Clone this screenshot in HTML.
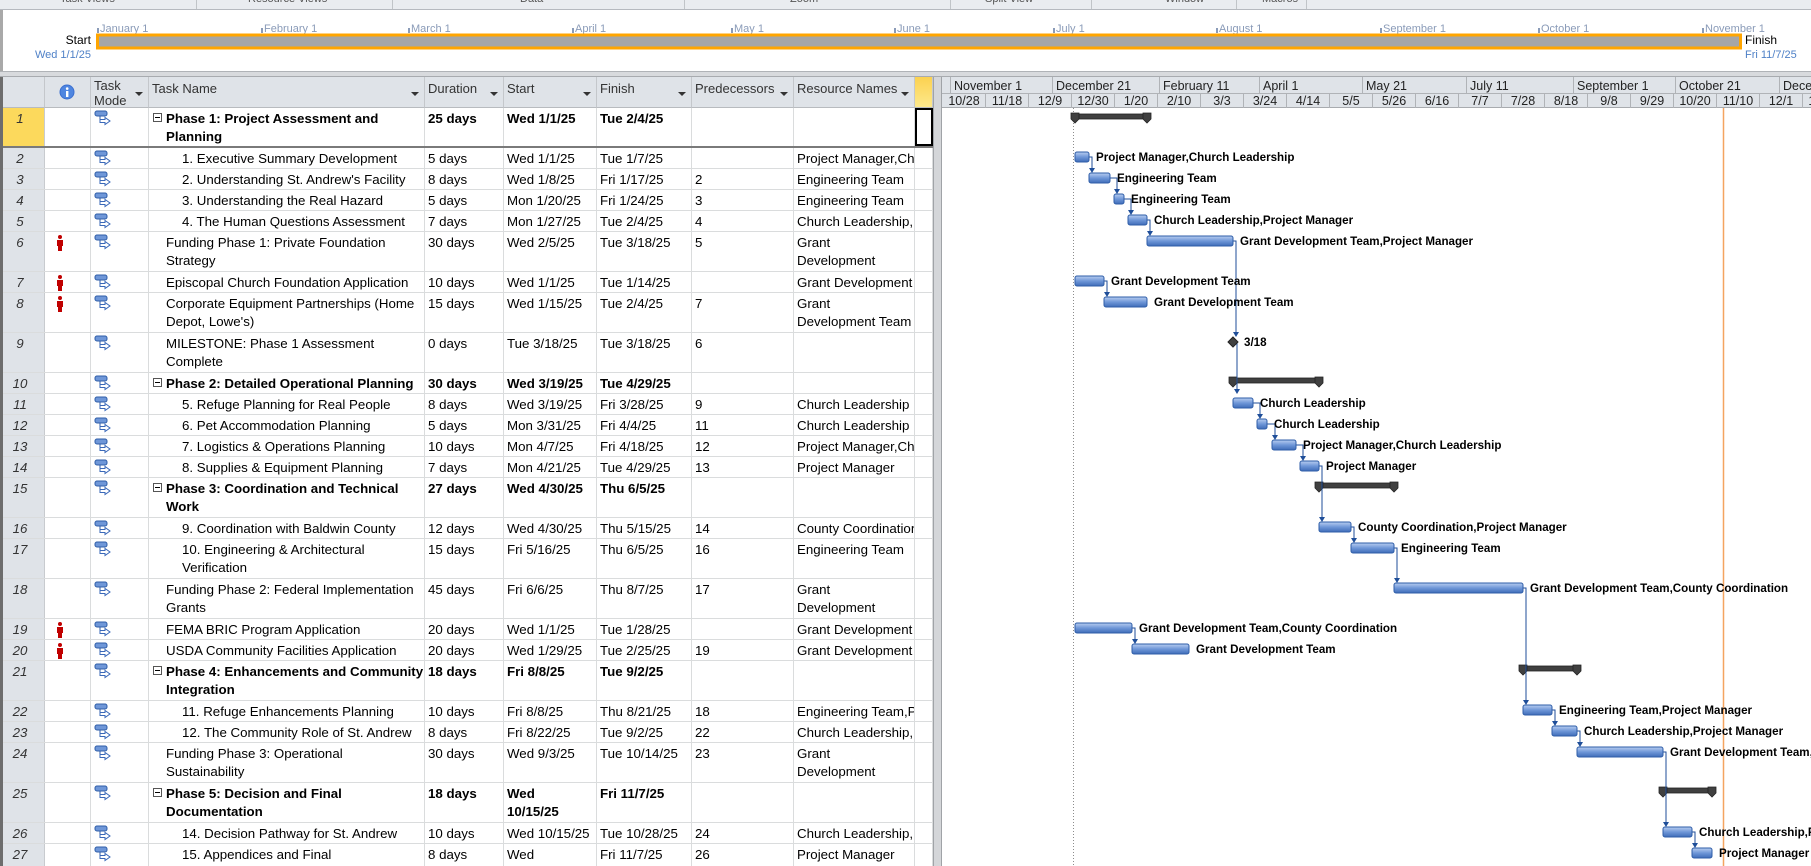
<!DOCTYPE html>
<html style="width:1811px;height:866px;overflow:hidden"><head><meta charset="utf-8">
<style>
*{margin:0;padding:0;box-sizing:border-box}
body{width:1811px;height:866px;overflow:hidden;background:#fff;font-family:"Liberation Sans",sans-serif;font-size:13.3px;color:#000;position:relative}
.abs{position:absolute}
.row{position:absolute;left:0;width:933px;border-bottom:1px solid #dadcdd}
.c{position:absolute;top:0;bottom:0;border-right:1px solid #dadcdd;overflow:hidden;white-space:nowrap;padding:2px 3px 0 3px;line-height:18px}
.n{left:0;width:45px;background:#dfe3e8;text-align:center;font-style:italic;color:#333;padding-left:0;padding-right:4px;border-right:1px solid #c8cbcf}
.i{left:45px;width:46px}
.m{left:91px;width:58px}
.t{left:149px;width:276px;padding-left:17px}
.t2{padding-left:33px}
.d{left:425px;width:79px}
.s{left:504px;width:93px}
.f{left:597px;width:95px}
.p{left:692px;width:102px}
.rs{left:794px;width:121px}
.y{left:915px;width:18px}
.b{font-weight:bold}
.box{display:inline-block;width:9px;height:9px;border:1px solid #555;position:absolute;left:4px;top:5px}
.box:after{content:"";position:absolute;left:1px;top:3px;width:5px;height:1px;background:#000}
.hd{position:absolute;top:77px;height:31px;background:#dfe3e8;border-right:1px solid #c4c7cb;border-bottom:1px solid #b8bbbf;color:#333;padding:4px 3px 0 3px;line-height:15px;font-size:13px}
.hd .ar{position:absolute;right:5px;top:15px;width:0;height:0;border-left:4px solid transparent;border-right:4px solid transparent;border-top:4px solid #333}
.mode{position:absolute;left:3px;top:2px}
.ind{position:absolute;left:11px;top:3px}
</style></head><body>

<div class="abs" style="left:0;top:0;width:1811px;height:10px;background:#e9ecf0;border-bottom:1px solid #b5b9bf;overflow:hidden;font-size:11px;color:#555">
<span class="abs" style="left:60px;top:-7px">Task Views</span>
<span class="abs" style="left:248px;top:-7px">Resource Views</span>
<span class="abs" style="left:520px;top:-7px">Data</span>
<span class="abs" style="left:790px;top:-7px">Zoom</span>
<span class="abs" style="left:985px;top:-7px">Split View</span>
<span class="abs" style="left:1165px;top:-7px">Window</span>
<span class="abs" style="left:1262px;top:-7px">Macros</span>
<div class="abs" style="left:196px;top:0;width:1px;height:10px;background:#c0c4c8"></div>
<div class="abs" style="left:392px;top:0;width:1px;height:10px;background:#c0c4c8"></div>
<div class="abs" style="left:684px;top:0;width:1px;height:10px;background:#c0c4c8"></div>
<div class="abs" style="left:950px;top:0;width:1px;height:10px;background:#c0c4c8"></div>
<div class="abs" style="left:1091px;top:0;width:1px;height:10px;background:#c0c4c8"></div>
<div class="abs" style="left:1236px;top:0;width:1px;height:10px;background:#c0c4c8"></div>
<div class="abs" style="left:1306px;top:0;width:1px;height:10px;background:#c0c4c8"></div>
</div>

<div class="abs" style="left:0;top:10px;width:1811px;height:61px;background:#fff;border-left:3px solid #a9a9a9"></div>
<div class="abs" style="left:0;top:71px;width:1811px;height:6px;background:#d8dadd;border-top:1px solid #b0b3b7;border-bottom:1px solid #a8abaf"></div>
<svg class="abs" style="left:0;top:0" width="1811" height="71">
<g font-family="Liberation Sans, sans-serif" font-size="11" fill="#8a9bb8">
<g stroke="#8a9bb8" stroke-width="2">
<line x1="98" y1="28" x2="98" y2="33"/><line x1="262" y1="28" x2="262" y2="33"/><line x1="409" y1="28" x2="409" y2="33"/><line x1="573" y1="28" x2="573" y2="33"/><line x1="732" y1="28" x2="732" y2="33"/><line x1="895" y1="28" x2="895" y2="33"/><line x1="1054" y1="28" x2="1054" y2="33"/><line x1="1217" y1="28" x2="1217" y2="33"/><line x1="1381" y1="28" x2="1381" y2="33"/><line x1="1539" y1="28" x2="1539" y2="33"/><line x1="1703" y1="28" x2="1703" y2="33"/>
</g>
<text x="100" y="32">January 1</text><text x="264" y="32">February 1</text><text x="411" y="32">March 1</text><text x="575" y="32">April 1</text><text x="734" y="32">May 1</text><text x="897" y="32">June 1</text><text x="1056" y="32">July 1</text><text x="1219" y="32">August 1</text><text x="1383" y="32">September 1</text><text x="1541" y="32">October 1</text><text x="1705" y="32">November 1</text>
</g>
<rect x="97.5" y="35" width="1643" height="13" fill="#a6a6a6" stroke="#ffa500" stroke-width="3"/>
<text x="91" y="44" text-anchor="end" font-family="Liberation Sans, sans-serif" font-size="12" fill="#000">Start</text>
<text x="91" y="58" text-anchor="end" font-family="Liberation Sans, sans-serif" font-size="11" fill="#4f81c7">Wed 1/1/25</text>
<text x="1745" y="44" font-family="Liberation Sans, sans-serif" font-size="12" fill="#000">Finish</text>
<text x="1745" y="58" font-family="Liberation Sans, sans-serif" font-size="11" fill="#4f81c7">Fri 11/7/25</text>
</svg>

<div class="abs" style="left:0;top:77px;width:3px;height:789px;background:#6d6d6d;z-index:5"></div>

<div class="hd" style="left:0;width:45px"></div>
<div class="hd" style="left:45px;width:46px"><svg class="abs" style="left:14px;top:7px" width="16" height="16"><circle cx="8" cy="8" r="7.5" fill="#3a6fd0"/><circle cx="8" cy="8" r="6.5" fill="#4f86e0"/><rect x="7" y="7" width="2.4" height="6" fill="#fff"/><circle cx="8.2" cy="4.6" r="1.3" fill="#fff"/></svg></div>
<div class="hd" style="left:91px;width:58px;padding-top:1px">Task<br>Mode<span class="ar"></span></div>
<div class="hd" style="left:149px;width:276px">Task Name<span class="ar"></span></div>
<div class="hd" style="left:425px;width:79px">Duration<span class="ar"></span></div>
<div class="hd" style="left:504px;width:93px">Start<span class="ar"></span></div>
<div class="hd" style="left:597px;width:95px">Finish<span class="ar"></span></div>
<div class="hd" style="left:692px;width:102px">Predecessors<span class="ar"></span></div>
<div class="hd" style="left:794px;width:121px">Resource Names<span class="ar"></span></div>
<div class="hd" style="left:915px;width:18px;background:linear-gradient(#fbd150,#fde98c)"></div>
<div class="abs" style="left:933px;top:77px;width:9px;height:789px;background:#d4d6d9;border-left:1px solid #a0a3a7;border-right:1px solid #a0a3a7"></div>

<svg width="0" height="0" style="position:absolute"><defs>
<symbol id="md" viewBox="0 0 20 18"><rect x="1" y="1" width="12" height="5" rx="2" fill="#6f97d8" stroke="#2f5ea8"/><line x1="6" y1="6" x2="6" y2="10" stroke="#2f5ea8"/><path d="M6 9.5 H11 V7.5 L16 11 L11 14.5 V12.5 H6 Z" fill="#fff" stroke="#3a68b8"/></symbol>
<symbol id="pp" viewBox="0 0 8 16"><circle cx="4" cy="2" r="2" fill="#c00000"/><rect x="1" y="5" width="6" height="6" fill="#c00000"/><rect x="2" y="10" width="4" height="6" fill="#c00000"/></symbol>
</defs></svg>

<div class="row" style="top:108px;height:40px;border-bottom:2px solid #7a7a7a"><div class="c n" style="background:#fcd95c">1</div><div class="c i"></div><div class="c m"><svg class="mode" width="20" height="18"><use href="#md"/></svg></div><div class="c t b"><span class="box"></span>Phase 1: Project Assessment and<br>Planning</div><div class="c d b">25 days</div><div class="c s b">Wed 1/1/25</div><div class="c f b">Tue 2/4/25</div><div class="c p"></div><div class="c rs"></div><div class="c y" style="border:2px solid #000"></div></div>
<div class="row" style="top:148px;height:21px"><div class="c n">2</div><div class="c i"></div><div class="c m"><svg class="mode" width="20" height="18"><use href="#md"/></svg></div><div class="c t t2">1. Executive Summary Development</div><div class="c d">5 days</div><div class="c s">Wed 1/1/25</div><div class="c f">Tue 1/7/25</div><div class="c p"></div><div class="c rs">Project Manager,Church Leadership</div><div class="c y"></div></div>
<div class="row" style="top:169px;height:21px"><div class="c n">3</div><div class="c i"></div><div class="c m"><svg class="mode" width="20" height="18"><use href="#md"/></svg></div><div class="c t t2">2. Understanding St. Andrew's Facility</div><div class="c d">8 days</div><div class="c s">Wed 1/8/25</div><div class="c f">Fri 1/17/25</div><div class="c p">2</div><div class="c rs">Engineering Team</div><div class="c y"></div></div>
<div class="row" style="top:190px;height:21px"><div class="c n">4</div><div class="c i"></div><div class="c m"><svg class="mode" width="20" height="18"><use href="#md"/></svg></div><div class="c t t2">3. Understanding the Real Hazard</div><div class="c d">5 days</div><div class="c s">Mon 1/20/25</div><div class="c f">Fri 1/24/25</div><div class="c p">3</div><div class="c rs">Engineering Team</div><div class="c y"></div></div>
<div class="row" style="top:211px;height:21px"><div class="c n">5</div><div class="c i"></div><div class="c m"><svg class="mode" width="20" height="18"><use href="#md"/></svg></div><div class="c t t2">4. The Human Questions Assessment</div><div class="c d">7 days</div><div class="c s">Mon 1/27/25</div><div class="c f">Tue 2/4/25</div><div class="c p">4</div><div class="c rs">Church Leadership,Project Manager</div><div class="c y"></div></div>
<div class="row" style="top:232px;height:40px"><div class="c n">6</div><div class="c i"><svg class="ind" width="8" height="16"><use href="#pp"/></svg></div><div class="c m"><svg class="mode" width="20" height="18"><use href="#md"/></svg></div><div class="c t">Funding Phase 1: Private Foundation<br>Strategy</div><div class="c d">30 days</div><div class="c s">Wed 2/5/25</div><div class="c f">Tue 3/18/25</div><div class="c p">5</div><div class="c rs">Grant<br>Development</div><div class="c y"></div></div>
<div class="row" style="top:272px;height:21px"><div class="c n">7</div><div class="c i"><svg class="ind" width="8" height="16"><use href="#pp"/></svg></div><div class="c m"><svg class="mode" width="20" height="18"><use href="#md"/></svg></div><div class="c t">Episcopal Church Foundation Application</div><div class="c d">10 days</div><div class="c s">Wed 1/1/25</div><div class="c f">Tue 1/14/25</div><div class="c p"></div><div class="c rs">Grant Development Team</div><div class="c y"></div></div>
<div class="row" style="top:293px;height:40px"><div class="c n">8</div><div class="c i"><svg class="ind" width="8" height="16"><use href="#pp"/></svg></div><div class="c m"><svg class="mode" width="20" height="18"><use href="#md"/></svg></div><div class="c t">Corporate Equipment Partnerships (Home<br>Depot, Lowe's)</div><div class="c d">15 days</div><div class="c s">Wed 1/15/25</div><div class="c f">Tue 2/4/25</div><div class="c p">7</div><div class="c rs">Grant<br>Development Team</div><div class="c y"></div></div>
<div class="row" style="top:333px;height:40px"><div class="c n">9</div><div class="c i"></div><div class="c m"><svg class="mode" width="20" height="18"><use href="#md"/></svg></div><div class="c t">MILESTONE: Phase 1 Assessment<br>Complete</div><div class="c d">0 days</div><div class="c s">Tue 3/18/25</div><div class="c f">Tue 3/18/25</div><div class="c p">6</div><div class="c rs"></div><div class="c y"></div></div>
<div class="row" style="top:373px;height:21px"><div class="c n">10</div><div class="c i"></div><div class="c m"><svg class="mode" width="20" height="18"><use href="#md"/></svg></div><div class="c t b"><span class="box"></span>Phase 2: Detailed Operational Planning</div><div class="c d b">30 days</div><div class="c s b">Wed 3/19/25</div><div class="c f b">Tue 4/29/25</div><div class="c p"></div><div class="c rs"></div><div class="c y"></div></div>
<div class="row" style="top:394px;height:21px"><div class="c n">11</div><div class="c i"></div><div class="c m"><svg class="mode" width="20" height="18"><use href="#md"/></svg></div><div class="c t t2">5. Refuge Planning for Real People</div><div class="c d">8 days</div><div class="c s">Wed 3/19/25</div><div class="c f">Fri 3/28/25</div><div class="c p">9</div><div class="c rs">Church Leadership</div><div class="c y"></div></div>
<div class="row" style="top:415px;height:21px"><div class="c n">12</div><div class="c i"></div><div class="c m"><svg class="mode" width="20" height="18"><use href="#md"/></svg></div><div class="c t t2">6. Pet Accommodation Planning</div><div class="c d">5 days</div><div class="c s">Mon 3/31/25</div><div class="c f">Fri 4/4/25</div><div class="c p">11</div><div class="c rs">Church Leadership</div><div class="c y"></div></div>
<div class="row" style="top:436px;height:21px"><div class="c n">13</div><div class="c i"></div><div class="c m"><svg class="mode" width="20" height="18"><use href="#md"/></svg></div><div class="c t t2">7. Logistics &amp; Operations Planning</div><div class="c d">10 days</div><div class="c s">Mon 4/7/25</div><div class="c f">Fri 4/18/25</div><div class="c p">12</div><div class="c rs">Project Manager,Church Leadership</div><div class="c y"></div></div>
<div class="row" style="top:457px;height:21px"><div class="c n">14</div><div class="c i"></div><div class="c m"><svg class="mode" width="20" height="18"><use href="#md"/></svg></div><div class="c t t2">8. Supplies &amp; Equipment Planning</div><div class="c d">7 days</div><div class="c s">Mon 4/21/25</div><div class="c f">Tue 4/29/25</div><div class="c p">13</div><div class="c rs">Project Manager</div><div class="c y"></div></div>
<div class="row" style="top:478px;height:40px"><div class="c n">15</div><div class="c i"></div><div class="c m"><svg class="mode" width="20" height="18"><use href="#md"/></svg></div><div class="c t b"><span class="box"></span>Phase 3: Coordination and Technical<br>Work</div><div class="c d b">27 days</div><div class="c s b">Wed 4/30/25</div><div class="c f b">Thu 6/5/25</div><div class="c p"></div><div class="c rs"></div><div class="c y"></div></div>
<div class="row" style="top:518px;height:21px"><div class="c n">16</div><div class="c i"></div><div class="c m"><svg class="mode" width="20" height="18"><use href="#md"/></svg></div><div class="c t t2">9. Coordination with Baldwin County</div><div class="c d">12 days</div><div class="c s">Wed 4/30/25</div><div class="c f">Thu 5/15/25</div><div class="c p">14</div><div class="c rs">County Coordination,Project Manager</div><div class="c y"></div></div>
<div class="row" style="top:539px;height:40px"><div class="c n">17</div><div class="c i"></div><div class="c m"><svg class="mode" width="20" height="18"><use href="#md"/></svg></div><div class="c t t2">10. Engineering &amp; Architectural<br>Verification</div><div class="c d">15 days</div><div class="c s">Fri 5/16/25</div><div class="c f">Thu 6/5/25</div><div class="c p">16</div><div class="c rs">Engineering Team</div><div class="c y"></div></div>
<div class="row" style="top:579px;height:40px"><div class="c n">18</div><div class="c i"></div><div class="c m"><svg class="mode" width="20" height="18"><use href="#md"/></svg></div><div class="c t">Funding Phase 2: Federal Implementation<br>Grants</div><div class="c d">45 days</div><div class="c s">Fri 6/6/25</div><div class="c f">Thu 8/7/25</div><div class="c p">17</div><div class="c rs">Grant<br>Development</div><div class="c y"></div></div>
<div class="row" style="top:619px;height:21px"><div class="c n">19</div><div class="c i"><svg class="ind" width="8" height="16"><use href="#pp"/></svg></div><div class="c m"><svg class="mode" width="20" height="18"><use href="#md"/></svg></div><div class="c t">FEMA BRIC Program Application</div><div class="c d">20 days</div><div class="c s">Wed 1/1/25</div><div class="c f">Tue 1/28/25</div><div class="c p"></div><div class="c rs">Grant Development Team</div><div class="c y"></div></div>
<div class="row" style="top:640px;height:21px"><div class="c n">20</div><div class="c i"><svg class="ind" width="8" height="16"><use href="#pp"/></svg></div><div class="c m"><svg class="mode" width="20" height="18"><use href="#md"/></svg></div><div class="c t">USDA Community Facilities Application</div><div class="c d">20 days</div><div class="c s">Wed 1/29/25</div><div class="c f">Tue 2/25/25</div><div class="c p">19</div><div class="c rs">Grant Development Team</div><div class="c y"></div></div>
<div class="row" style="top:661px;height:40px"><div class="c n">21</div><div class="c i"></div><div class="c m"><svg class="mode" width="20" height="18"><use href="#md"/></svg></div><div class="c t b"><span class="box"></span>Phase 4: Enhancements and Community<br>Integration</div><div class="c d b">18 days</div><div class="c s b">Fri 8/8/25</div><div class="c f b">Tue 9/2/25</div><div class="c p"></div><div class="c rs"></div><div class="c y"></div></div>
<div class="row" style="top:701px;height:21px"><div class="c n">22</div><div class="c i"></div><div class="c m"><svg class="mode" width="20" height="18"><use href="#md"/></svg></div><div class="c t t2">11. Refuge Enhancements Planning</div><div class="c d">10 days</div><div class="c s">Fri 8/8/25</div><div class="c f">Thu 8/21/25</div><div class="c p">18</div><div class="c rs">Engineering Team,Project Manager</div><div class="c y"></div></div>
<div class="row" style="top:722px;height:21px"><div class="c n">23</div><div class="c i"></div><div class="c m"><svg class="mode" width="20" height="18"><use href="#md"/></svg></div><div class="c t t2">12. The Community Role of St. Andrew</div><div class="c d">8 days</div><div class="c s">Fri 8/22/25</div><div class="c f">Tue 9/2/25</div><div class="c p">22</div><div class="c rs">Church Leadership,Project Manager</div><div class="c y"></div></div>
<div class="row" style="top:743px;height:40px"><div class="c n">24</div><div class="c i"></div><div class="c m"><svg class="mode" width="20" height="18"><use href="#md"/></svg></div><div class="c t">Funding Phase 3: Operational<br>Sustainability</div><div class="c d">30 days</div><div class="c s">Wed 9/3/25</div><div class="c f">Tue 10/14/25</div><div class="c p">23</div><div class="c rs">Grant<br>Development</div><div class="c y"></div></div>
<div class="row" style="top:783px;height:40px"><div class="c n">25</div><div class="c i"></div><div class="c m"><svg class="mode" width="20" height="18"><use href="#md"/></svg></div><div class="c t b"><span class="box"></span>Phase 5: Decision and Final<br>Documentation</div><div class="c d b">18 days</div><div class="c s b">Wed<br>10/15/25</div><div class="c f b">Fri 11/7/25</div><div class="c p"></div><div class="c rs"></div><div class="c y"></div></div>
<div class="row" style="top:823px;height:21px"><div class="c n">26</div><div class="c i"></div><div class="c m"><svg class="mode" width="20" height="18"><use href="#md"/></svg></div><div class="c t t2">14. Decision Pathway for St. Andrew</div><div class="c d">10 days</div><div class="c s">Wed 10/15/25</div><div class="c f">Tue 10/28/25</div><div class="c p">24</div><div class="c rs">Church Leadership,Project Manager</div><div class="c y"></div></div>
<div class="row" style="top:844px;height:22px;border-bottom:none"><div class="c n">27</div><div class="c i"></div><div class="c m"><svg class="mode" width="20" height="18"><use href="#md"/></svg></div><div class="c t t2">15. Appendices and Final</div><div class="c d">8 days</div><div class="c s">Wed</div><div class="c f">Fri 11/7/25</div><div class="c p">26</div><div class="c rs">Project Manager</div><div class="c y"></div></div>

<svg class="abs" style="left:942px;top:77px" width="869" height="789" viewBox="942 77 869 789" font-family="Liberation Sans, sans-serif">
<defs><linearGradient id="bg" x1="0" y1="0" x2="0" y2="1"><stop offset="0" stop-color="#b8cdf0"/><stop offset="0.5" stop-color="#6f97d8"/><stop offset="1" stop-color="#3f6cb8"/></linearGradient></defs>
<rect x="942" y="77" width="869" height="31" fill="#dfe3e8"/>
<line x1="942" y1="93.5" x2="1811" y2="93.5" stroke="#b0b3b7"/>
<line x1="942" y1="107.5" x2="1811" y2="107.5" stroke="#a8abaf"/>
<g stroke="#b0b3b7">
<line x1="950.5" y1="77" x2="950.5" y2="93"/><line x1="1052.5" y1="77" x2="1052.5" y2="93"/><line x1="1159.5" y1="77" x2="1159.5" y2="93"/><line x1="1259.5" y1="77" x2="1259.5" y2="93"/><line x1="1362.5" y1="77" x2="1362.5" y2="93"/><line x1="1466.5" y1="77" x2="1466.5" y2="93"/><line x1="1573.5" y1="77" x2="1573.5" y2="93"/><line x1="1675.5" y1="77" x2="1675.5" y2="93"/><line x1="1779.5" y1="77" x2="1779.5" y2="93"/>
<line x1="985.5" y1="93" x2="985.5" y2="108"/><line x1="1028.5" y1="93" x2="1028.5" y2="108"/><line x1="1071.5" y1="93" x2="1071.5" y2="108"/><line x1="1114.5" y1="93" x2="1114.5" y2="108"/><line x1="1157.5" y1="93" x2="1157.5" y2="108"/><line x1="1200.5" y1="93" x2="1200.5" y2="108"/><line x1="1243.5" y1="93" x2="1243.5" y2="108"/><line x1="1286.5" y1="93" x2="1286.5" y2="108"/><line x1="1329.5" y1="93" x2="1329.5" y2="108"/><line x1="1372.5" y1="93" x2="1372.5" y2="108"/><line x1="1415.5" y1="93" x2="1415.5" y2="108"/><line x1="1458.5" y1="93" x2="1458.5" y2="108"/><line x1="1501.5" y1="93" x2="1501.5" y2="108"/><line x1="1544.5" y1="93" x2="1544.5" y2="108"/><line x1="1587.5" y1="93" x2="1587.5" y2="108"/><line x1="1630.5" y1="93" x2="1630.5" y2="108"/><line x1="1673.5" y1="93" x2="1673.5" y2="108"/><line x1="1716.5" y1="93" x2="1716.5" y2="108"/><line x1="1759.5" y1="93" x2="1759.5" y2="108"/><line x1="1802.5" y1="93" x2="1802.5" y2="108"/>
</g>
<g font-size="12.5" fill="#222">
<text x="954" y="90">November 1</text><text x="1056" y="90">December 21</text><text x="1163" y="90">February 11</text><text x="1263" y="90">April 1</text><text x="1366" y="90">May 21</text><text x="1470" y="90">July 11</text><text x="1577" y="90">September 1</text><text x="1679" y="90">October 21</text><text x="1783" y="90">December 11</text>
</g>
<g font-size="12.5" fill="#222" text-anchor="middle">
<text x="964" y="105">10/28</text><text x="1007" y="105">11/18</text><text x="1050" y="105">12/9</text><text x="1093" y="105">12/30</text><text x="1136" y="105">1/20</text><text x="1179" y="105">2/10</text><text x="1222" y="105">3/3</text><text x="1265" y="105">3/24</text><text x="1308" y="105">4/14</text><text x="1351" y="105">5/5</text><text x="1394" y="105">5/26</text><text x="1437" y="105">6/16</text><text x="1480" y="105">7/7</text><text x="1523" y="105">7/28</text><text x="1566" y="105">8/18</text><text x="1609" y="105">9/8</text><text x="1652" y="105">9/29</text><text x="1695" y="105">10/20</text><text x="1738" y="105">11/10</text><text x="1781" y="105">12/1</text><text x="1824" y="105">12/22</text>
</g>
<line x1="1073.5" y1="108" x2="1073.5" y2="866" stroke="#8c8c8c" stroke-dasharray="1,2"/>
<line x1="1723.5" y1="108" x2="1723.5" y2="866" stroke="#f4a460" stroke-width="1.5"/>

<g fill="#404040" stroke="#222" stroke-width="0.8">
<rect x="1075" y="114" width="72" height="5"/><polygon points="1071,113 1079,113 1079,119 1075,123 1071,119"/><polygon points="1143,113 1151,113 1151,119 1147,123 1143,119"/>
<rect x="1233" y="378" width="86" height="5"/><polygon points="1229,377 1237,377 1237,383 1233,387 1229,383"/><polygon points="1315,377 1323,377 1323,383 1319,387 1315,383"/>
<rect x="1319" y="483" width="75" height="5"/><polygon points="1315,482 1323,482 1323,488 1319,492 1315,488"/><polygon points="1390,482 1398,482 1398,488 1394,492 1390,488"/>
<rect x="1523" y="666" width="54" height="5"/><polygon points="1519,665 1527,665 1527,671 1523,675 1519,671"/><polygon points="1573,665 1581,665 1581,671 1577,675 1573,671"/>
<rect x="1663" y="788" width="49" height="5"/><polygon points="1659,787 1667,787 1667,793 1663,797 1659,793"/><polygon points="1708,787 1716,787 1716,793 1712,797 1708,793"/>
</g>

<g fill="none" stroke="#1f4e99" stroke-width="1">
<path d="M1089 157H1092V169"/><path d="M1110 178H1117V190"/><path d="M1124 199H1131V211"/><path d="M1147 220H1150V232"/><path d="M1104 281H1107V293"/><path d="M1233 241H1236V333"/><path d="M1237 342V390"/><path d="M1253 403H1260V415"/><path d="M1267 424H1275V436"/><path d="M1296 445H1303V457"/><path d="M1319 466H1322V518"/><path d="M1351 527H1354V539"/><path d="M1394 548H1397V579"/><path d="M1132 628H1135V640"/><path d="M1523 588H1526V701"/><path d="M1552 710H1555V722"/><path d="M1577 731H1580V743"/><path d="M1663 752H1666V823"/><path d="M1692 832H1695V844"/>
</g>
<g fill="#1f4e99">
<polygon points="1089,168 1095,168 1092,173"/><polygon points="1114,189 1120,189 1117,194"/><polygon points="1128,210 1134,210 1131,215"/><polygon points="1147,231 1153,231 1150,236"/><polygon points="1104,292 1110,292 1107,297"/><polygon points="1233,332 1239,332 1236,337"/><polygon points="1234,389 1240,389 1237,394"/><polygon points="1257,414 1263,414 1260,419"/><polygon points="1272,435 1278,435 1275,440"/><polygon points="1300,456 1306,456 1303,461"/><polygon points="1319,517 1325,517 1322,522"/><polygon points="1351,538 1357,538 1354,543"/><polygon points="1394,578 1400,578 1397,583"/><polygon points="1132,639 1138,639 1135,644"/><polygon points="1523,700 1529,700 1526,705"/><polygon points="1552,721 1558,721 1555,726"/><polygon points="1577,742 1583,742 1580,747"/><polygon points="1663,822 1669,822 1666,827"/><polygon points="1692,843 1698,843 1695,848"/>
</g>

<g fill="url(#bg)" stroke="#2f5ea8" stroke-width="1">
<rect x="1075" y="152" width="14" height="10" rx="2"/>
<rect x="1089" y="173" width="21" height="10" rx="2"/>
<rect x="1114" y="194" width="10" height="10" rx="2"/>
<rect x="1128" y="215" width="19" height="10" rx="2"/>
<rect x="1147" y="236" width="86" height="10" rx="2"/>
<rect x="1075" y="276" width="29" height="10" rx="2"/>
<rect x="1104" y="297" width="43" height="10" rx="2"/>
<rect x="1233" y="398" width="20" height="10" rx="2"/>
<rect x="1257" y="419" width="10" height="10" rx="2"/>
<rect x="1272" y="440" width="24" height="10" rx="2"/>
<rect x="1300" y="461" width="19" height="10" rx="2"/>
<rect x="1319" y="522" width="32" height="10" rx="2"/>
<rect x="1351" y="543" width="43" height="10" rx="2"/>
<rect x="1394" y="583" width="129" height="10" rx="2"/>
<rect x="1075" y="623" width="57" height="10" rx="2"/>
<rect x="1132" y="644" width="57" height="10" rx="2"/>
<rect x="1523" y="705" width="29" height="10" rx="2"/>
<rect x="1552" y="726" width="25" height="10" rx="2"/>
<rect x="1577" y="747" width="86" height="10" rx="2"/>
<rect x="1663" y="827" width="29" height="10" rx="2"/>
<rect x="1692" y="848" width="20" height="10" rx="2"/>
</g>
<polygon points="1233,337 1238,342 1233,347 1228,342" fill="#404040" stroke="#222"/>

<g font-size="11.6" font-weight="bold" fill="#000">
<text x="1096" y="161">Project Manager,Church Leadership</text>
<text x="1117" y="182">Engineering Team</text>
<text x="1131" y="203">Engineering Team</text>
<text x="1154" y="224">Church Leadership,Project Manager</text>
<text x="1240" y="245">Grant Development Team,Project Manager</text>
<text x="1111" y="285">Grant Development Team</text>
<text x="1154" y="306">Grant Development Team</text>
<text x="1244" y="346">3/18</text>
<text x="1260" y="407">Church Leadership</text>
<text x="1274" y="428">Church Leadership</text>
<text x="1303" y="449">Project Manager,Church Leadership</text>
<text x="1326" y="470">Project Manager</text>
<text x="1358" y="531">County Coordination,Project Manager</text>
<text x="1401" y="552">Engineering Team</text>
<text x="1530" y="592">Grant Development Team,County Coordination</text>
<text x="1139" y="632">Grant Development Team,County Coordination</text>
<text x="1196" y="653">Grant Development Team</text>
<text x="1559" y="714">Engineering Team,Project Manager</text>
<text x="1584" y="735">Church Leadership,Project Manager</text>
<text x="1670" y="756">Grant Development Team,Project Manager</text>
<text x="1699" y="836">Church Leadership,Project Manager</text>
<text x="1719" y="857">Project Manager</text>
</g>
</svg>
</body></html>
